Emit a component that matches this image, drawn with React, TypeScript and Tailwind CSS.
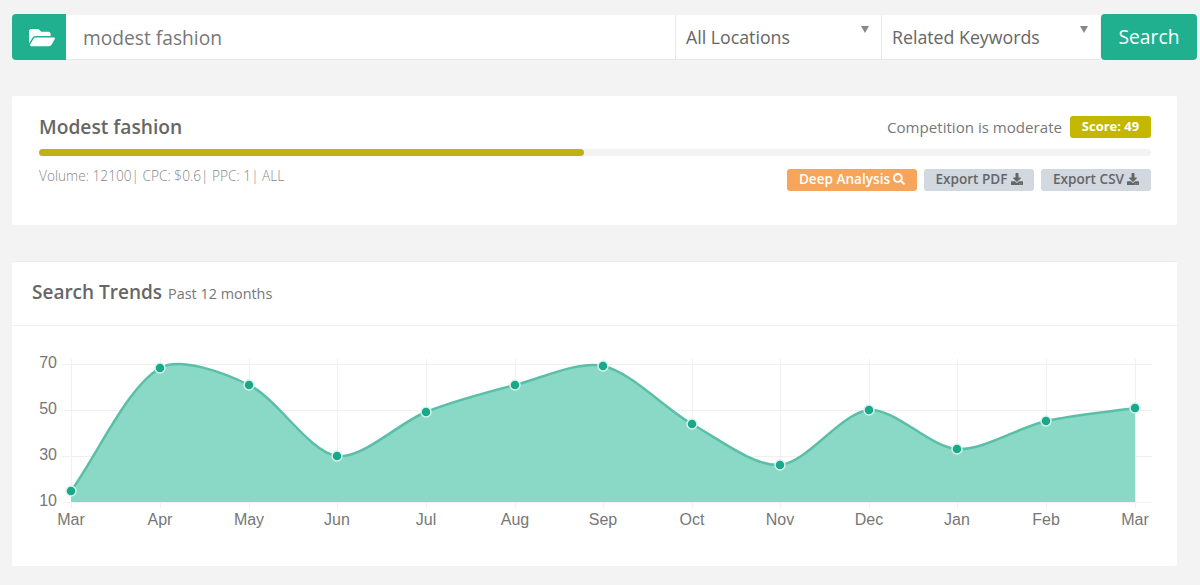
import { FaDownload, FaFolderOpen, FaSearch } from "react-icons/fa";

const months = ["Mar", "Apr", "May", "Jun", "Jul", "Aug", "Sep", "Oct", "Nov", "Dec", "Jan", "Feb", "Mar"];
const xs = [71, 160, 249, 337, 426, 515, 603, 692, 780, 869, 957, 1046, 1135];
const ys = [490, 367, 384, 455, 411, 384, 365, 423, 464, 409, 448, 420, 407];
const gridY = [
  { y: 363, label: "70" },
  { y: 409, label: "50" },
  { y: 455, label: "30" },
  { y: 501, label: "10" },
];

// same spline chart.js draws, tension tuned to the picture
function linePath() {
  const t = 0.3;
  let d = `M${xs[0]} ${ys[0]}`;
  for (let i = 0; i < xs.length - 1; i++) {
    const p0 = Math.max(i - 1, 0);
    const p3 = Math.min(i + 2, xs.length - 1);
    const d01 = Math.hypot(xs[i] - xs[p0], ys[i] - ys[p0]);
    const d12 = Math.hypot(xs[i + 1] - xs[i], ys[i + 1] - ys[i]);
    const d23 = Math.hypot(xs[p3] - xs[i + 1], ys[p3] - ys[i + 1]);
    const f1 = (t * d12) / (d01 + d12);
    const f2 = (t * d12) / (d12 + d23);
    const c1x = xs[i] + f1 * (xs[i + 1] - xs[p0]);
    const c1y = ys[i] + f1 * (ys[i + 1] - ys[p0]);
    const c2x = xs[i + 1] - f2 * (xs[p3] - xs[i]);
    const c2y = ys[i + 1] - f2 * (ys[p3] - ys[i]);
    d += ` C${c1x.toFixed(1)} ${c1y.toFixed(1)} ${c2x.toFixed(1)} ${c2y.toFixed(1)} ${xs[i + 1]} ${ys[i + 1]}`;
  }
  return d;
}

function TrendChart() {
  const line = linePath();
  return (
    <svg viewBox="12 325 1165 241" className="block w-[1165px] h-[241px]">
      <defs>
        <clipPath id="plot">
          <rect x="12" y="325" width="1137" height="241" />
        </clipPath>
      </defs>
      {gridY.map(g => (
        <line key={g.y} x1="62" x2="1152" y1={g.y + 0.5} y2={g.y + 0.5} stroke="#f0f0f0" />
      ))}
      {xs.map((x, i) => (
        <line key={i} x1={x + 0.5} x2={x + 0.5} y1="358" y2="507" stroke="#f0f0f0" />
      ))}
      <path d={`${line} L1135 501 L71 501 Z`} fill="#8ad8c6" />
      <path d={line} fill="none" stroke="#5bbfa8" strokeWidth="2.5" />
      {xs.map((x, i) => (
        <circle key={i} cx={x} cy={ys[i]} r="5" fill="#1aa88a" stroke="#d9f3ec" strokeWidth="1.5" />
      ))}
      <g fontFamily="'Liberation Sans', Arial, sans-serif" fontSize="16" fill="#777">
        {gridY.map(g => (
          <text key={g.y} x="57" y={g.y + 4} textAnchor="end">{g.label}</text>
        ))}
        <g clipPath="url(#plot)">
          {months.map((m, i) => (
            <text key={i} x={xs[i]} y="524" textAnchor="middle">{m}</text>
          ))}
        </g>
      </g>
    </svg>
  );
}

function SelectBox({ label, width }: { label: string; width: string }) {
  return (
    <div className={`relative h-[45px] flex items-center pl-[10px] bg-white border-l border-b border-[#e8e8e8] text-[17.75px] text-[#666] ${width}`}>
      {label}
      <span className="absolute right-[12px] top-[11px] w-0 h-0 border-x-[4.5px] border-x-transparent border-t-[7px] border-t-[#888]" />
    </div>
  );
}

export default function App() {
  return (
    <div className="w-[1200px] h-[585px] overflow-hidden bg-[#f3f3f3] font-['Open_Sans',sans-serif] text-[#666]">
      <div className="flex items-stretch pt-[15px] pl-[12px]">
        <div className="w-[54px] h-[46px] -mt-px rounded-l-[4px] bg-[#20b08f] flex items-center justify-center text-white">
          <FaFolderOpen className="w-[26px] h-[23px] ml-[5px]" />
        </div>
        <div className="w-[609px] h-[45px] bg-white border-b border-[#e8e8e8] flex items-center pl-[17px] pt-[2px] text-[19.2px] text-[#777]">
          modest fashion
        </div>
        <SelectBox label="All Locations" width="w-[206px]" />
        <SelectBox label="Related Keywords" width="w-[219px]" />
        <button className="ml-px w-[96px] h-[46px] -mt-px rounded-[4px] bg-[#20b08f] text-white text-[19.3px]">Search</button>
      </div>

      <div className="mt-[36px] ml-[12px] w-[1165px] h-[129px] bg-white rounded-[2px] pl-[27px] pr-[26px] pt-[17px]">
        <div className="flex items-center justify-between h-[28px]">
          <h2 className="text-[19.2px] font-semibold text-[#666]">Modest fashion</h2>
          <div className="flex items-center gap-[8px]">
            <span className="text-[15.1px] text-[#777]">Competition is moderate</span>
            <span className="w-[81px] h-[22px] rounded-[3px] bg-[#c4b700] text-white text-[13px] font-bold flex items-center justify-center">Score: 49</span>
          </div>
        </div>
        <div className="mt-[8px] h-[7px] rounded-full bg-[#f3f3f3]">
          <div className="h-full w-[49%] rounded-full bg-[#c0b311]" />
        </div>
        <div className="flex justify-between mt-[10px]">
          <p className="text-[13.7px] font-light text-[#888] leading-[20px]">Volume: 12100| CPC: $0.6| PPC: 1| ALL</p>
          <div className="flex gap-[7px] mt-[3px]">
            <span className="w-[130px] h-[22px] pb-[2px] rounded-[3px] bg-[#f7a55a] text-white text-[13.6px] font-semibold flex items-center justify-center gap-[3px]">
              Deep Analysis <FaSearch className="w-[12px] h-[12px]" />
            </span>
            <span className="w-[110px] h-[22px] pb-[2px] rounded-[3px] bg-[#d2d8e0] text-[#666] text-[13.6px] font-semibold flex items-center justify-center gap-[3px]">
              Export PDF <FaDownload className="w-[12px] h-[12px]" />
            </span>
            <span className="w-[110px] h-[22px] pb-[2px] rounded-[3px] bg-[#d2d8e0] text-[#666] text-[13.6px] font-semibold flex items-center justify-center gap-[3px]">
              Export CSV <FaDownload className="w-[12px] h-[12px]" />
            </span>
          </div>
        </div>
      </div>

      <div className="mt-[36px] ml-[12px] w-[1165px] h-[305px] bg-white rounded-[2px] border-t border-[#e6eeec]">
        <div className="h-[64px] border-b border-[#f0f0f0] flex items-center pl-[20px] gap-[6px] pb-[2px]">
          <h3 className="text-[19px] font-semibold text-[#666]">Search Trends</h3>
          <span className="text-[14.4px] text-[#777] mt-[2px]">Past 12 months</span>
        </div>
        <TrendChart />
      </div>
    </div>
  );
}
